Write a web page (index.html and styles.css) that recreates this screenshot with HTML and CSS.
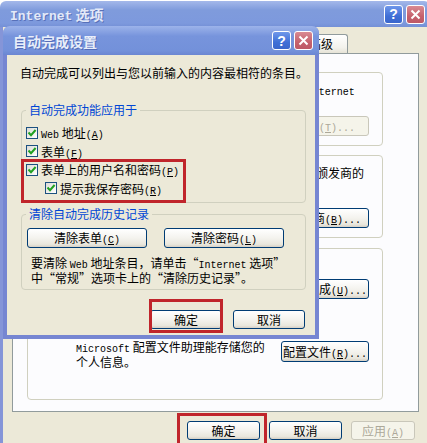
FILE: index.html
```html
<!doctype html>
<html>
<head>
    <meta charset="UTF-8">
    <title>Internet 选项</title>
    <link rel="stylesheet" href="styles.css">
</head>
<body>
<div class="screen">
    <!-- 后面的 Internet 选项 窗口（被对话框挡住的部分不画） -->
    <div class="win">
        <div class="win-title">
            <span class="win-caption"><span class="cap-en">Internet</span> 选项</span>
            <span class="cap-btns">
                <span class="cap-btn cap-help">?</span>
                <span class="cap-btn cap-close"><svg width="11" height="11" viewBox="0 0 11 11"><path d="M1.5 1.5 L9.5 9.5 M9.5 1.5 L1.5 9.5" stroke="#fff" stroke-width="2" fill="none"/></svg></span>
            </span>
        </div>
        <div class="win-body">
            <div class="tabs">
                <span class="tab">高级</span>
            </div>
            <div class="panel">
                <div class="grp grp-rating">
                    <p class="grp-text">分级审查帮助您控制在该计算机上能查看的 <span class="en">Internet</span></p>
                    <div class="btn-row">
                        <span class="btn btn-side btn-off">设置<span class="en">(<u>T</u>)...</span></span>
                    </div>
                </div>
                <div class="grp grp-cert">
                    <p class="grp-text">标识证书颁发机构和颁发商的</p>
                    <div class="btn-row">
                        <span class="btn btn-side">发行商<span class="en">(<u>B</u>)...</span></span>
                    </div>
                </div>
                <div class="grp grp-personal">
                    <div class="btn-row">
                        <span class="btn btn-side">自动完成<span class="en">(<u>U</u>)...</span></span>
                    </div>
                    <div class="grp-line">
                        <p class="grp-text"><span class="en">Microsoft</span> 配置文件助理能存储您的<br>个人信息。</p>
                        <span class="btn btn-side btn-low">配置文件<span class="en">(<u>R</u>)...</span></span>
                    </div>
                </div>
            </div>
            <div class="foot">
                <span class="btn-wrap">
                    <span class="btn btn-foot">确定</span>
                    <span class="mark mark-outer"></span>
                </span>
                <span class="btn btn-foot">取消</span>
                <span class="btn btn-foot btn-apply btn-off">应用<span class="en">(<u>A</u>)</span></span>
            </div>
        </div>
    </div>

    <!-- 前面的 自动完成设置 对话框 -->
    <div class="dlg">
        <div class="dlg-title">
            <span class="dlg-caption">自动完成设置</span>
            <span class="cap-btns">
                <span class="cap-btn cap-help">?</span>
                <span class="cap-btn cap-close"><svg width="11" height="11" viewBox="0 0 11 11"><path d="M1.5 1.5 L9.5 9.5 M9.5 1.5 L1.5 9.5" stroke="#fff" stroke-width="2" fill="none"/></svg></span>
            </span>
        </div>
        <div class="dlg-body">
            <p class="dlg-desc">自动完成可以列出与您以前输入的内容最相符的条目。</p>
            <fieldset class="box box-use">
                <legend>自动完成功能应用于</legend>
                <label class="chk"><span class="chk-box"><svg width="10" height="10" viewBox="0 0 10 10"><path d="M1.5 4.5 L4 7.2 L8.6 2" stroke="#21a121" stroke-width="2" fill="none"/></svg></span><span class="chk-text"><span class="en">Web</span> 地址<span class="en">(<u>A</u>)</span></span></label>
                <label class="chk"><span class="chk-box"><svg width="10" height="10" viewBox="0 0 10 10"><path d="M1.5 4.5 L4 7.2 L8.6 2" stroke="#21a121" stroke-width="2" fill="none"/></svg></span><span class="chk-text">表单<span class="en">(<u>F</u>)</span></span></label>
                <div class="chk-pair">
                    <label class="chk"><span class="chk-box"><svg width="10" height="10" viewBox="0 0 10 10"><path d="M1.5 4.5 L4 7.2 L8.6 2" stroke="#21a121" stroke-width="2" fill="none"/></svg></span><span class="chk-text">表单上的用户名和密码<span class="en">(<u>P</u>)</span></span></label>
                    <label class="chk chk-sub"><span class="chk-box"><svg width="10" height="10" viewBox="0 0 10 10"><path d="M1.5 4.5 L4 7.2 L8.6 2" stroke="#21a121" stroke-width="2" fill="none"/></svg></span><span class="chk-text">提示我保存密码<span class="en">(<u>R</u>)</span></span></label>
                    <span class="mark mark-pair"></span>
                </div>
            </fieldset>
            <fieldset class="box box-clear">
                <legend>清除自动完成历史记录</legend>
                <div class="clear-btns">
                    <span class="btn btn-clear">清除表单<span class="en">(<u>C</u>)</span></span>
                    <span class="btn btn-clear">清除密码<span class="en">(<u>L</u>)</span></span>
                </div>
                <p class="clear-note">要清除 <span class="en">Web</span> 地址条目，请单击“<span class="en">Internet</span> 选项”<br>中“常规”选项卡上的“清除历史记录”。</p>
            </fieldset>
            <div class="dlg-foot">
                <span class="btn-wrap">
                    <span class="btn btn-foot">确定</span>
                    <span class="mark mark-inner"></span>
                </span>
                <span class="btn btn-foot">取消</span>
            </div>
        </div>
    </div>
</div>
</body>
</html>
```

FILE: styles.css
```css
* {
    margin: 0;
    padding: 0;
    box-sizing: border-box;
}

body {
    width: 427px;
    height: 443px;
    overflow: hidden;
    background-color: #fff;
    font-family: "Noto Sans CJK SC", sans-serif;
    font-size: 12px;
    color: #000;
}

.screen {
    position: relative;
    width: 427px;
    height: 443px;
    overflow: hidden;
    padding-top: 1px;
}

.en {
    font-family: "Liberation Mono", monospace;
    font-size: 10px;
    line-height: 10px;
}

/* 标题栏按钮 */
.cap-btns {
    display: flex;
    gap: 3px;
}

.cap-btn {
    width: 19px;
    height: 19px;
    border: 1px solid #fff;
    border-radius: 3px;
    display: flex;
    align-items: center;
    justify-content: center;
    color: #fff;
    font-family: "Liberation Sans", sans-serif;
    font-weight: bold;
    font-size: 14px;
}

.cap-help {
    background: linear-gradient(#6f97ea, #3f6fd6 60%, #3a66cc);
}

.cap-close {
    background: linear-gradient(#d98a92, #c5616d 60%, #bd5866);
}

/* 外层窗口 */
.win {
    width: 430px;
}

.win-title {
    height: 26px;
    display: flex;
    align-items: center;
    justify-content: space-between;
    padding: 0 5px 0 10px;
    border-radius: 6px 6px 0 0;
    background: linear-gradient(#a4b8ea, #7f9bdc 35%, #7d99dd 85%, #7490d6);
}

.win-caption {
    color: #e3e9f8;
    font-size: 14px;
    font-weight: bold;
    text-shadow: 1px 1px 0 rgba(40, 60, 140, .45);
}

.cap-en {
    font-family: "Liberation Mono", monospace;
    font-size: 13px;
}

.win-body {
    height: 430px;
    background-color: #ece9d8;
    border-left: 3px solid #8595d8;
    border-right: 3px solid #8595d8;
    padding: 6px 0 0 9px;
}

.tabs {
    display: flex;
    align-items: flex-end;
    height: 20px;
    padding-left: 288px;
}

.tab {
    width: 48px;
    height: 19px;
    padding-left: 8px;
    line-height: 18px;
    border: 1px solid #919b9c;
    border-bottom: none;
    border-radius: 3px 3px 0 0;
    background: linear-gradient(#fff, #f3f2ec 70%, #e6e3d6);
}

.panel {
    width: 407px;
    height: 359px;
    border: 1px solid #919b9c;
    background-color: #fcfcfe;
    padding: 18px 35px 0 14px;
}

.grp {
    border: 1px solid #d0d0bf;
    border-radius: 4px;
    padding: 0 13px 0 48px;
}

.grp-text {
    line-height: 13px;
    white-space: nowrap;
}

.grp-rating {
    height: 74px;
    padding-top: 10px;
}

.grp-rating .btn-row {
    margin-top: 18px;
}

.grp-cert {
    height: 83px;
    margin-top: 9px;
    padding-top: 10px;
}

.grp-cert .grp-text {
    text-align: right;
    padding-right: 5px;
}

.grp-cert .btn-row {
    margin-top: 29px;
}

.grp-personal {
    height: 152px;
    margin-top: 10px;
    padding-top: 30px;
}

.btn-row {
    display: flex;
    justify-content: flex-end;
}

.grp-line {
    display: flex;
    justify-content: space-between;
    align-items: flex-start;
    margin-top: 41px;
}

/* 按钮 */
.btn {
    display: inline-block;
    height: 20px;
    line-height: 18px;
    text-align: center;
    border: 1px solid #003c74;
    border-radius: 3px;
    background: linear-gradient(#fff, #f4f3ee 50%, #e9e7dd 85%, #d6d0c5);
    white-space: nowrap;
}

.btn-off {
    border-color: #c9c7ba;
    color: #aca899;
    background: #f5f4ea;
}

.btn-side {
    width: 88px;
}

.btn-low {
    height: 21px;
    line-height: 19px;
    margin-top: 1px;
}

.foot {
    display: flex;
    gap: 9px;
    margin-top: 9px;
    padding-left: 175px;
}

.btn-foot {
    width: 73px;
    height: 19px;
    line-height: 17px;
}

.btn-apply {
    width: 64px;
}

.btn-wrap {
    position: relative;
    display: inline-flex;
}

/* 红色标注框 */
.mark {
    position: absolute;
    border: 3px solid #c0252b;
}

.mark-outer {
    left: -10px;
    right: -7px;
    top: -8px;
    bottom: -6px;
}

.mark-inner {
    left: -1px;
    right: -1px;
    top: -11px;
    bottom: -4px;
}

.mark-pair {
    left: -5px;
    top: -2px;
    width: 165px;
    bottom: -5px;
}

/* 自动完成设置 对话框 */
.dlg {
    position: absolute;
    left: 3px;
    top: 26px;
    width: 316px;
    height: 313px;
    padding: 0 4px 4px;
    border-radius: 7px 7px 0 0;
    background-color: #7686d2;
}

.dlg-title {
    height: 29px;
    margin: 0 -4px;
    padding: 0 6px 0 10px;
    display: flex;
    align-items: center;
    justify-content: space-between;
    border-radius: 7px 7px 0 0;
    background: linear-gradient(#9cb3ea, #7794dc 35%, #7391da 85%, #6b86d2);
}

.dlg-caption {
    color: #e8eefa;
    font-size: 14px;
    font-weight: bold;
    text-shadow: 1px 1px 0 rgba(40, 60, 140, .45);
}

.dlg-body {
    height: 280px;
    background-color: #ece9d8;
    padding: 11px 9px 8px 13px;
}

.dlg-desc {
    line-height: 14px;
    white-space: nowrap;
}

.box {
    margin-left: 1px;
    border: 1px solid #d0d0bf;
    border-radius: 4px;
    padding: 0 4px;
}

.box legend {
    padding: 0 3px;
    line-height: 14px;
    color: #0046d5;
}

.box-use {
    margin-top: 23px;
    padding-top: 6.5px;
    padding-bottom: 4.5px;
}

.chk {
    display: flex;
    align-items: center;
    height: 18.5px;
    white-space: nowrap;
}

.chk-sub {
    padding-left: 19px;
}

.chk-box {
    width: 12px;
    height: 12px;
    margin-right: 3px;
    border: 1px solid #1c5180;
    background: linear-gradient(135deg, #dcdcd7, #fff);
    display: flex;
    align-items: center;
    justify-content: center;
}

.chk-pair {
    position: relative;
}

.box-clear {
    margin-top: 4px;
    padding-top: 7px;
    padding-bottom: 5.5px;
}

.clear-btns {
    display: flex;
    gap: 17px;
    padding-left: 1px;
}

.btn-clear {
    width: 120px;
}

.clear-note {
    margin-top: 7.5px;
    padding-left: 5px;
    line-height: 13px;
    white-space: nowrap;
}

.dlg-foot {
    display: flex;
    justify-content: flex-end;
    gap: 11px;
    margin-top: 20px;
    padding-right: 1px;
}

.dlg-foot .btn-foot {
    width: 72px;
}
```
